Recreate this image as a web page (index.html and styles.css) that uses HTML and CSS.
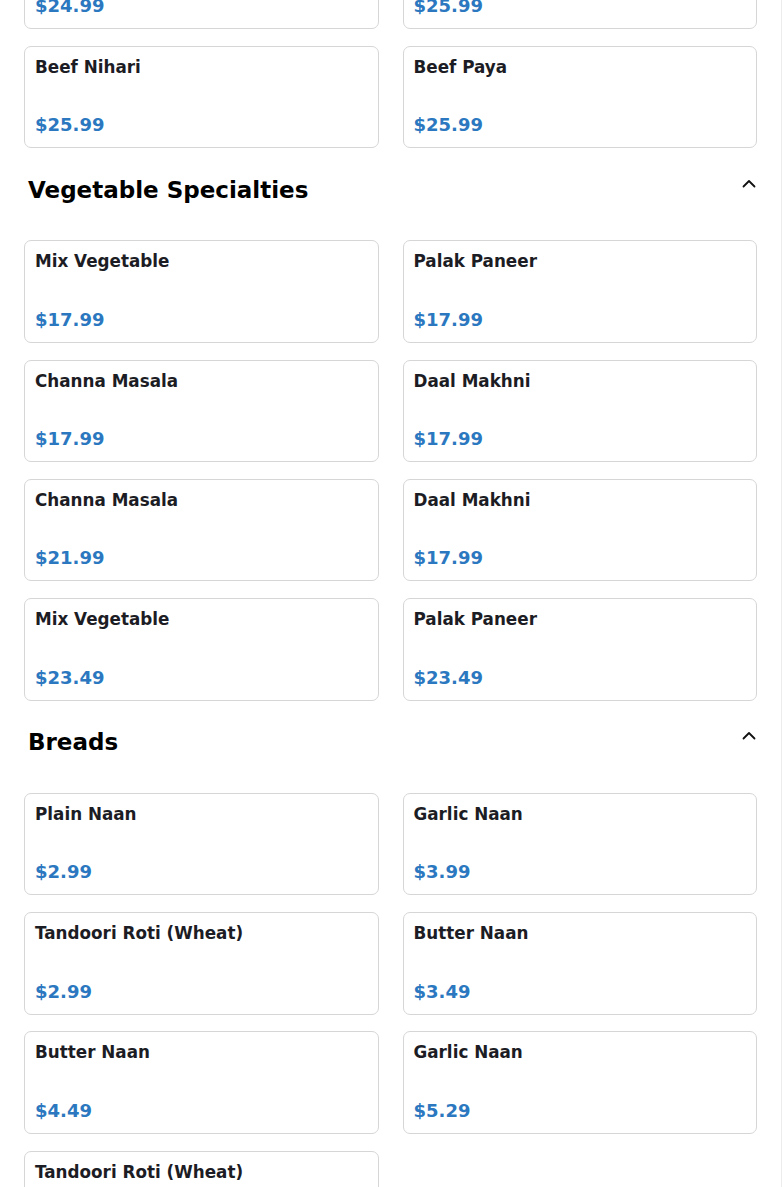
FILE: index.html
```html
<!DOCTYPE html>
<html>
<head>
<meta charset="utf-8">
<link rel="stylesheet" href="styles.css">
</head>
<body>
<div class="page">
  <section class="section">
    <div class="grid">
      <div class="card"><div class="name">Beef Qorma</div><div class="price">$24.99</div></div>
      <div class="card"><div class="name">Beef Haleem</div><div class="price">$25.99</div></div>
      <div class="card"><div class="name">Beef Nihari</div><div class="price">$25.99</div></div>
      <div class="card"><div class="name">Beef Paya</div><div class="price">$25.99</div></div>
    </div>
  </section>
  <section class="section">
    <div class="head">
      <h2 class="title">Vegetable Specialties</h2>
      <svg class="chev" width="14" height="9" viewBox="0 0 14 9"><path d="M1.5 7.5 L7 2 L12.5 7.5" fill="none" stroke="#111" stroke-width="1.8" stroke-linecap="round" stroke-linejoin="round"/></svg>
    </div>
    <div class="grid">
      <div class="card"><div class="name">Mix Vegetable</div><div class="price">$17.99</div></div>
      <div class="card"><div class="name">Palak Paneer</div><div class="price">$17.99</div></div>
      <div class="card"><div class="name">Channa Masala</div><div class="price">$17.99</div></div>
      <div class="card"><div class="name">Daal Makhni</div><div class="price">$17.99</div></div>
      <div class="card"><div class="name">Channa Masala</div><div class="price">$21.99</div></div>
      <div class="card"><div class="name">Daal Makhni</div><div class="price">$17.99</div></div>
      <div class="card"><div class="name">Mix Vegetable</div><div class="price">$23.49</div></div>
      <div class="card"><div class="name">Palak Paneer</div><div class="price">$23.49</div></div>
    </div>
  </section>
  <section class="section">
    <div class="head">
      <h2 class="title">Breads</h2>
      <svg class="chev" width="14" height="9" viewBox="0 0 14 9"><path d="M1.5 7.5 L7 2 L12.5 7.5" fill="none" stroke="#111" stroke-width="1.8" stroke-linecap="round" stroke-linejoin="round"/></svg>
    </div>
    <div class="grid">
      <div class="card"><div class="name">Plain Naan</div><div class="price">$2.99</div></div>
      <div class="card"><div class="name">Garlic Naan</div><div class="price">$3.99</div></div>
      <div class="card"><div class="name">Tandoori Roti (Wheat)</div><div class="price">$2.99</div></div>
      <div class="card"><div class="name">Butter Naan</div><div class="price">$3.49</div></div>
      <div class="card"><div class="name">Butter Naan</div><div class="price">$4.49</div></div>
      <div class="card"><div class="name">Garlic Naan</div><div class="price">$5.29</div></div>
      <div class="card"><div class="name">Tandoori Roti (Wheat)</div><div class="price">$3.49</div></div>
    </div>
  </section>
</div>
</body>
</html>
```
FILE: styles.css
```css
html, body {
  margin: 0;
  padding: 0;
  background: #fff;
  font-family: "DejaVu Sans", sans-serif;
  overflow: hidden;
}
.page {
  width: 782px;
  box-sizing: border-box;
  border-right: 1px solid #ececec;
  padding: 0 24px 0 24px;
  margin-top: -73.5px;
  min-height: 1400px;
}
.section {
  margin-bottom: 28.5px;
}
.head {
  display: flex;
  justify-content: space-between;
  align-items: flex-start;
  padding: 0 1px 0 4px;
  margin-bottom: 36.5px;
}
.title {
  margin: 0;
  font-size: 23px;
  line-height: 27px;
  font-weight: bold;
  color: #000;
}
.chev {
  margin-top: 2px;
}
.grid {
  display: grid;
  grid-template-columns: 1fr 1fr;
  column-gap: 24px;
  row-gap: 16.83px;
}
.card {
  height: 102.5px;
  box-sizing: border-box;
  border: 1px solid #d6d6d6;
  border-radius: 7px;
  padding: 8px 10px 9px;
  display: flex;
  flex-direction: column;
  justify-content: space-between;
}
.name {
  font-size: 16.8px;
  line-height: 24px;
  font-weight: bold;
  color: #1c1c24;
}
.price {
  font-size: 18px;
  line-height: 27px;
  font-weight: bold;
  color: #2b78c0;
}
```
